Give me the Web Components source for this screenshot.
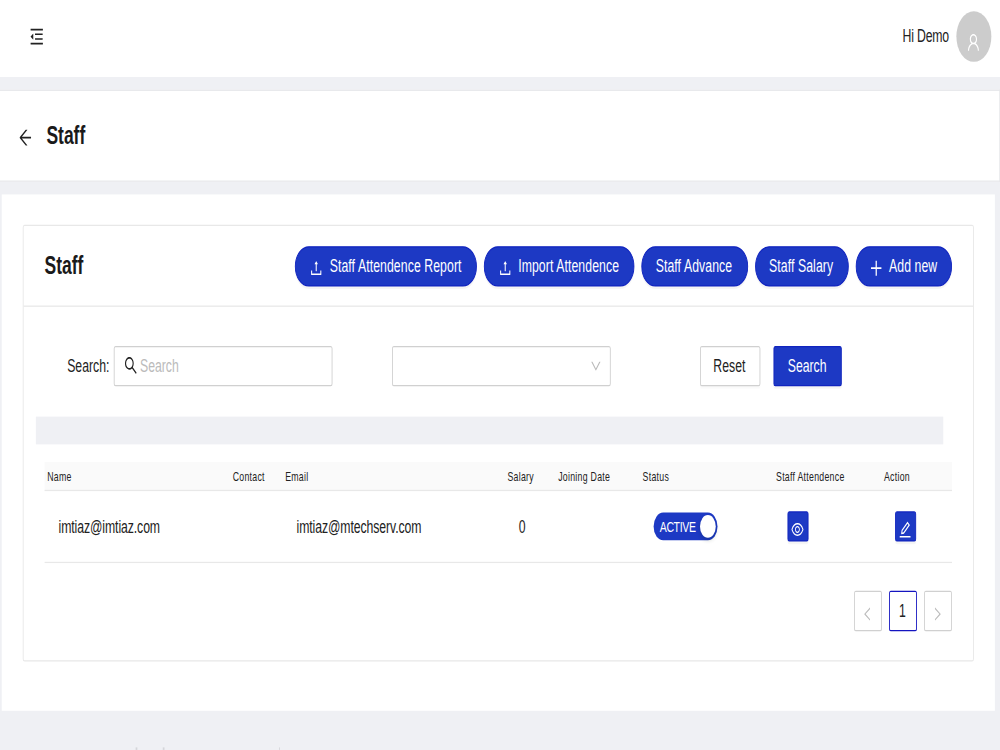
<!DOCTYPE html>
<html lang="en">
<head>
<meta charset="utf-8">
<title>Staff</title>
<style>
    html, body { margin: 0; height: 100%; background: #eff0f4; }
    body { font-family: "Liberation Sans", Arial, sans-serif; font-size: 14px; color: #222; }
</style>
</head>
<body>
<staff-app></staff-app>

<script>
const ICONS = {
    fold: 'M408 442h480c4.4 0 8-3.6 8-8v-56c0-4.4-3.6-8-8-8H408c-4.4 0-8 3.6-8 8v56c0 4.4 3.6 8 8 8zm-8 204c0 4.4 3.6 8 8 8h480c4.4 0 8-3.6 8-8v-56c0-4.4-3.6-8-8-8H408c-4.4 0-8 3.6-8 8v56zm504-486H120c-4.4 0-8 3.6-8 8v56c0 4.4 3.6 8 8 8h784c4.4 0 8-3.6 8-8v-56c0-4.4-3.6-8-8-8zm0 632H120c-4.4 0-8 3.6-8 8v56c0 4.4 3.6 8 8 8h784c4.4 0 8-3.6 8-8v-56c0-4.4-3.6-8-8-8zM115.4 518.9L271.7 642c5.8 4.6 14.4.5 14.4-6.9V388.9c0-7.4-8.5-11.5-14.4-6.9L115.4 505.1a8.74 8.74 0 0 0 0 13.8z',
    back: 'M872 474H286.9l350.2-304c5.6-4.9 2.2-14-5.2-14h-88.5c-3.9 0-7.6 1.4-10.5 3.9L155 487.8a31.96 31.96 0 0 0 0 48.3L535.1 866c1.5 1.3 3.3 2 5.2 2h91.5c7.4 0 10.8-9.2 5.2-14L286.9 550H872c4.4 0 8-3.6 8-8v-60c0-4.4-3.6-8-8-8z',
    user: 'M858.5 763.6a374 374 0 0 0-80.6-119.5 375.63 375.63 0 0 0-119.5-80.6c-.4-.2-.8-.3-1.2-.5C719.5 518 760 444.7 760 362c0-137-111-248-248-248S264 225 264 362c0 82.7 40.5 156 102.8 201.1-.4.2-.8.3-1.2.5-44.8 18.9-85 46-119.5 80.6a375.63 375.63 0 0 0-80.6 119.5A371.7 371.7 0 0 0 136 901.8a8 8 0 0 0 8 8.2h60c4.4 0 7.9-3.5 8-7.8 2-77.2 33-149.5 87.8-204.3 56.7-56.7 132-87.9 212.2-87.9s155.5 31.2 212.2 87.9C779 752.7 810 825 812 902.2c.1 4.4 3.6 7.8 8 7.8h60a8 8 0 0 0 8-8.2c-1-47.8-10.9-94.3-29.5-138.2zM512 534c-45.9 0-89.1-17.9-121.6-50.4S340 407.9 340 362c0-45.9 17.9-89.1 50.4-121.6S466.1 190 512 190s89.1 17.9 121.6 50.4S684 316.1 684 362c0 45.9-17.9 89.1-50.4 121.6S557.9 534 512 534z',
    upload: 'M400 317.7h73.9V656c0 4.4 3.6 8 8 8h60c4.4 0 8-3.6 8-8V317.7H624c6.7 0 10.4-7.7 6.3-12.9L518.3 163a8 8 0 0 0-12.6 0l-112 141.7c-4.1 5.3-.4 13 6.3 13zM878 626h-60c-4.4 0-8 3.6-8 8v154H214V634c0-4.4-3.6-8-8-8h-60c-4.4 0-8 3.6-8 8v198c0 17.7 14.3 32 32 32h684c17.7 0 32-14.3 32-32V634c0-4.4-3.6-8-8-8z',
    plus: 'M466 132h92v334h334v92H558v334h-92V558H132v-92h334z',
    search: 'M909.6 854.5L649.9 594.8C690.2 542.7 712 479 712 412c0-80.2-31.3-155.4-87.9-212.1-56.6-56.7-132-87.9-212.1-87.9s-155.5 31.3-212.1 87.9C143.2 256.5 112 331.8 112 412c0 80.1 31.3 155.5 87.9 212.1C256.5 680.8 331.8 712 412 712c67 0 130.6-21.8 182.7-62l259.7 259.6a8.2 8.2 0 0 0 11.6 0l43.6-43.5a8.2 8.2 0 0 0 0-11.6zM570.4 570.4C528 612.7 471.8 636 412 636s-116-23.3-158.4-65.6C211.3 528 188 471.8 188 412s23.3-116.1 65.6-158.4C296 211.3 352.2 188 412 188s116.1 23.2 158.4 65.6S636 352.2 636 412s-23.3 116.1-65.6 158.4z',
    down: 'M884 256h-75c-5.1 0-9.9 2.5-12.9 6.6L512 654.2 227.9 262.6c-3-4.1-7.8-6.6-12.9-6.6h-75c-6.5 0-10.3 7.4-6.5 12.7l352.6 486.1c12.8 17.6 39 17.6 51.7 0l352.6-486.1c3.9-5.3.1-12.7-6.4-12.7z',
    left: 'M724 218.3V141c0-6.7-7.7-10.4-12.9-6.3L260.3 486.8a31.86 31.86 0 0 0 0 50.3l450.8 352.1c5.3 4.1 12.9.4 12.9-6.3v-77.3c0-4.9-2.3-9.6-6.1-12.6l-360-281 360-281.1c3.8-3 6.1-7.7 6.1-12.6z',
    right: 'M765.7 486.8L314.9 134.7A7.97 7.97 0 0 0 302 141v77.3c0 4.9 2.3 9.6 6.1 12.6l360 281.1-360 281.1c-3.9 3-6.1 7.7-6.1 12.6V883c0 6.7 7.7 10.4 12.9 6.3l450.8-352.1a31.96 31.96 0 0 0 0-50.4z',
    eye: 'M942.2 486.2C847.4 286.5 704.1 186 512 186c-192.2 0-335.4 100.5-430.2 300.3a60.3 60.3 0 0 0 0 51.5C176.6 737.5 319.9 838 512 838c192.2 0 335.4-100.5 430.2-300.3 7.7-16.2 7.7-35 0-51.5zM512 766c-161.3 0-279.4-81.8-362.7-254C232.6 339.8 350.7 258 512 258c161.3 0 279.4 81.8 362.7 254C791.5 684.2 673.4 766 512 766zm-4-430c-97.2 0-176 78.8-176 176s78.8 176 176 176 176-78.8 176-176-78.8-176-176-176zm0 288c-61.9 0-112-50.1-112-112s50.1-112 112-112 112 50.1 112 112-50.1 112-112 112z',
    edit: 'M257.7 752c2 0 4-.2 6-.5L431.9 722c2-.4 3.9-1.3 5.3-2.8l423.9-423.9a9.96 9.96 0 0 0 0-14.1L694.9 114.9c-1.9-1.9-4.4-2.9-7.1-2.9s-5.2 1-7.1 2.9L256.8 538.8c-1.5 1.5-2.4 3.3-2.8 5.3l-29.5 168.2a33.5 33.5 0 0 0 9.4 29.8c6.6 6.4 14.9 9.9 23.8 9.9zm67.4-174.4L687.8 215l73.3 73.3-362.7 362.6-88.9 15.7 15.6-89zM880 836H144c-17.7 0-32 14.3-32 32v36c0 4.4 3.6 8 8 8h784c4.4 0 8-3.6 8-8v-36c0-17.7-14.3-32-32-32z',
};

// Attach an open shadow root with the given markup
function shadow(el, html) {
    el.attachShadow({ mode: 'open' }).innerHTML = html;
}

class UiIcon extends HTMLElement {
    connectedCallback() {
        if (this.shadowRoot) return;
        const size = this.getAttribute('size') || 16;
        shadow(this, `
            <style>
                :host { display: block; flex: none; width: ${size}px; height: ${size}px; }
                svg { display: block; width: 100%; height: 100%; fill: currentColor; }
            </style>
            <svg viewBox="0 0 1024 1024"><path d="${ICONS[this.getAttribute('name')]}"/></svg>`);
    }
}

class UiButton extends HTMLElement {
    constructor() {
        super();
        shadow(this, `
            <style>
                :host {
                    box-sizing: border-box;
                    display: flex;
                    align-items: center;
                    justify-content: center;
                    height: 32px;
                    flex: none;
                    border: 1px solid #d0d0d0;
                    border-radius: 2px;
                    background: #fff;
                    line-height: 30px;
                    white-space: nowrap;
                    box-shadow: 0 2px 0 rgba(0,0,0,0.02);
                }
                :host([primary]) {
                    color: #fff;
                    background: #1d39c4;
                    border-color: #1124bf;
                    box-shadow: 0 2px 0 rgba(0,0,0,0.04);
                }
                :host([round]) { border-radius: 16px; letter-spacing: 0.1px; }
                :host([small]) { width: 24px; height: 24px; }
                slot {
                    display: flex;
                    align-items: center;
                    gap: 7px;
                    transform: translate(-0.6px, -0.6px);
                }
                ::slotted(ui-icon) { margin-top: 5px; }
                :host([small]) ::slotted(ui-icon) { margin-top: 7px; }
            </style>
            <slot></slot>`);
    }
}

class UiInput extends HTMLElement {
    constructor() {
        super();
        shadow(this, `
            <style>
                :host {
                    box-sizing: border-box;
                    display: flex;
                    align-items: center;
                    width: 250px;
                    height: 32px;
                    padding: 0 9px 0 9.7px;
                    border: 1px solid #d0d0d0;
                    border-radius: 2px;
                    background: #fff;
                    color: #bbb;
                }
                .hint { flex: 1; line-height: 30px; transform: translateY(-0.6px); }
            </style>
            <slot name="prefix"></slot>
            <span class="hint"><slot></slot></span>
            <slot name="suffix"></slot>`);
    }
}

class UiSwitch extends HTMLElement {
    constructor() {
        super();
        shadow(this, `
            <style>
                :host {
                    box-sizing: border-box;
                    display: flex;
                    align-items: center;
                    justify-content: space-between;
                    width: 73px;
                    height: 22px;
                    padding: 0 2px 0 6.6px;
                    border-radius: 11px;
                    background: #1d39c4;
                    color: #fff;
                    font-size: 12px;
                    letter-spacing: -0.4px;
                }
                i { width: 18px; height: 18px; border-radius: 50%; background: #fff; box-shadow: 0 2px 4px rgba(0,35,11,0.2); }
            </style>
            <span><slot></slot></span><i></i>`);
    }
}

class TopBar extends HTMLElement {
    constructor() {
        super();
        shadow(this, `
            <style>
                :host {
                    box-sizing: border-box;
                    display: flex;
                    align-items: center;
                    height: 60.6px;
                    padding: 0 10.3px 3.4px 32.6px;
                    background: #fff;
                }
                .user { margin: -2px 8px 0 auto; letter-spacing: -0.2px; }
                .avatar {
                    display: flex;
                    align-items: center;
                    justify-content: center;
                    width: 40px;
                    height: 40px;
                    border-radius: 50%;
                    background: #ccc;
                    color: #fff;
                }
                .avatar ui-icon { margin-top: 10px; }
            </style>
            <ui-icon name="fold" size="18"></ui-icon>
            <span class="user"><slot></slot></span>
            <div class="avatar"><ui-icon name="user" size="17"></ui-icon></div>`);
    }
}

class PageHeader extends HTMLElement {
    constructor() {
        super();
        shadow(this, `
            <style>
                :host {
                    box-sizing: border-box;
                    display: flex;
                    align-items: center;
                    height: 73.4px;
                    margin: 10px 0.2px 0 0;
                    padding-left: 20px;
                    background: #fff;
                    border: 1px solid #e6e7ea;
                    border-left: 0;
                }
                b { margin-left: 15px; font-size: 20px; color: #1a1a1a; }
                ui-icon { margin-top: 4px; }
            </style>
            <ui-icon name="back" size="18"></ui-icon>
            <b><slot></slot></b>`);
    }
}

class StaffCard extends HTMLElement {
    constructor() {
        super();
        shadow(this, `
            <style>
                :host {
                    box-sizing: border-box;
                    display: block;
                    height: 346.4px;
                    border: 1px solid #e8e8e8;
                    border-radius: 2px;
                    background: #fff;
                }
                header {
                    display: flex;
                    align-items: center;
                    height: 63.6px;
                    padding: 0 24px 0 23.4px;
                    border-bottom: 1px solid #e8e8e8;
                }
                b { flex: 1; font-size: 20px; color: #1a1a1a; }
                .extra { display: flex; gap: 8px; }
            </style>
            <header>
                <b><slot name="title"></slot></b>
                <div class="extra"><slot name="extra"></slot></div>
            </header>
            <slot></slot>`);
    }
}

class SearchForm extends HTMLElement {
    constructor() {
        super();
        shadow(this, `
            <style>
                :host { display: flex; align-items: center; padding: 30.4px 0 0 49.3px; }
                label { width: 53.6px; line-height: 30px; transform: translateY(-0.6px); }
                .status { margin-left: 67.7px; }
                .reset { width: 69px; margin-left: 101.6px; }
                .go { width: 78px; margin-left: 15.4px; }
                .lens { color: #222; margin-right: 1.9px; }
            </style>
            <label>Search:</label>
            <ui-input><ui-icon class="lens" slot="prefix" name="search" size="17"></ui-icon>Search</ui-input>
            <ui-input class="status"><ui-icon slot="suffix" name="down" size="14"></ui-icon></ui-input>
            <ui-button class="reset">Reset</ui-button>
            <ui-button class="go" primary>Search</ui-button>`);
    }
}

class StaffTable extends HTMLElement {
    constructor() {
        super();
        const heads = ['Name', 'Contact', 'Email', 'Salary', 'Joining Date', 'Status', 'Staff Attendence', 'Action'];
        shadow(this, `
            <style>
                :host { display: block; margin: 14.2px 24px 0 23.4px; }
                .row {
                    display: grid;
                    grid-template-columns: 212px 60px 254px 58px 96.5px 152.5px 123.4px 1fr;
                    align-items: center;
                    height: 55.8px;
                    border-bottom: 1px solid #e8e8e8;
                }
                .row > * { padding-left: 16px; }
                .row > .mail { letter-spacing: -0.1px; }
                .head { height: 22px; background: #fafafa; font-size: 10px; letter-spacing: 0.32px; }
                .head > * { padding-left: 3px; }
            </style>
            <div class="row head">${heads.map(h => `<span>${h}</span>`).join('')}</div>
            <div class="row">
                <span class="mail">imtiaz@imtiaz.com</span>
                <span></span>
                <span class="mail">imtiaz@mtechserv.com</span>
                <span>0</span>
                <span></span>
                <div><ui-switch>ACTIVE</ui-switch></div>
                <div><ui-button small primary><ui-icon name="eye"></ui-icon></ui-button></div>
                <div><ui-button small primary><ui-icon name="edit"></ui-icon></ui-button></div>
            </div>`);
    }
}

class PageList extends HTMLElement {
    constructor() {
        super();
        shadow(this, `
            <style>
                :host { display: flex; justify-content: flex-end; gap: 8px; margin: 21.9px 23.7px 0 0; }
                ui-button { width: 32px; color: #bbb; box-shadow: none; }
                .current { color: #222; border-color: #1414c0; }
                ui-icon { margin-top: 7px; }
            </style>
            <ui-button><ui-icon name="left" size="14"></ui-icon></ui-button>
            <ui-button class="current">1</ui-button>
            <ui-button><ui-icon name="right" size="14"></ui-icon></ui-button>`);
    }
}

class StaffApp extends HTMLElement {
    constructor() {
        super();
        shadow(this, `
            <style>
                :host { display: block; width: 100%; height: 100vh; overflow: hidden; }
                .stage {
                    width: 1142.85px;
                    height: 594.05px;
                    overflow: hidden;
                    transform: scale(0.875, 1.2625);
                    transform-origin: 0 0;
                }
                main {
                    box-sizing: border-box;
                    height: 409px;
                    margin: 10.2px 5.7px 0 2.3px;
                    padding: 23.7px 24.5px 0 24.2px;
                    background: #fff;
                }
                .bar { height: 22.2px; margin: 23.8px 34px 0 13.5px; background: #eff0f4; }
                .report { width: 208px; }
                .import { width: 171.4px; }
                .advance { width: 122px; }
                .salary { width: 107px; }
                .add { width: 110px; }
                footer { display: flex; gap: 29px; padding: 28.8px 0 0 155px; }
                footer i { width: 2px; height: 2px; background: #d5d6da; }
                footer i:last-child { width: 1px; margin-left: 102px; }
            </style>
            <div class="stage">
                <top-bar>Hi Demo</top-bar>
                <page-header>Staff</page-header>
                <main>
                    <staff-card>
                        <span slot="title">Staff</span>
                        <ui-button slot="extra" class="report" primary round><ui-icon name="upload"></ui-icon>Staff Attendence Report</ui-button>
                        <ui-button slot="extra" class="import" primary round><ui-icon name="upload"></ui-icon>Import Attendence</ui-button>
                        <ui-button slot="extra" class="advance" primary round>Staff Advance</ui-button>
                        <ui-button slot="extra" class="salary" primary round>Staff Salary</ui-button>
                        <ui-button slot="extra" class="add" primary round><ui-icon name="plus"></ui-icon>Add new</ui-button>
                        <search-form></search-form>
                        <div class="bar"></div>
                        <staff-table></staff-table>
                        <page-list></page-list>
                    </staff-card>
                </main>
                <footer><i></i><i></i><i></i></footer>
            </div>`);
    }
}

customElements.define('ui-icon', UiIcon);
customElements.define('ui-button', UiButton);
customElements.define('ui-input', UiInput);
customElements.define('ui-switch', UiSwitch);
customElements.define('top-bar', TopBar);
customElements.define('page-header', PageHeader);
customElements.define('staff-card', StaffCard);
customElements.define('search-form', SearchForm);
customElements.define('staff-table', StaffTable);
customElements.define('page-list', PageList);
customElements.define('staff-app', StaffApp);
</script>
</body>
</html>
